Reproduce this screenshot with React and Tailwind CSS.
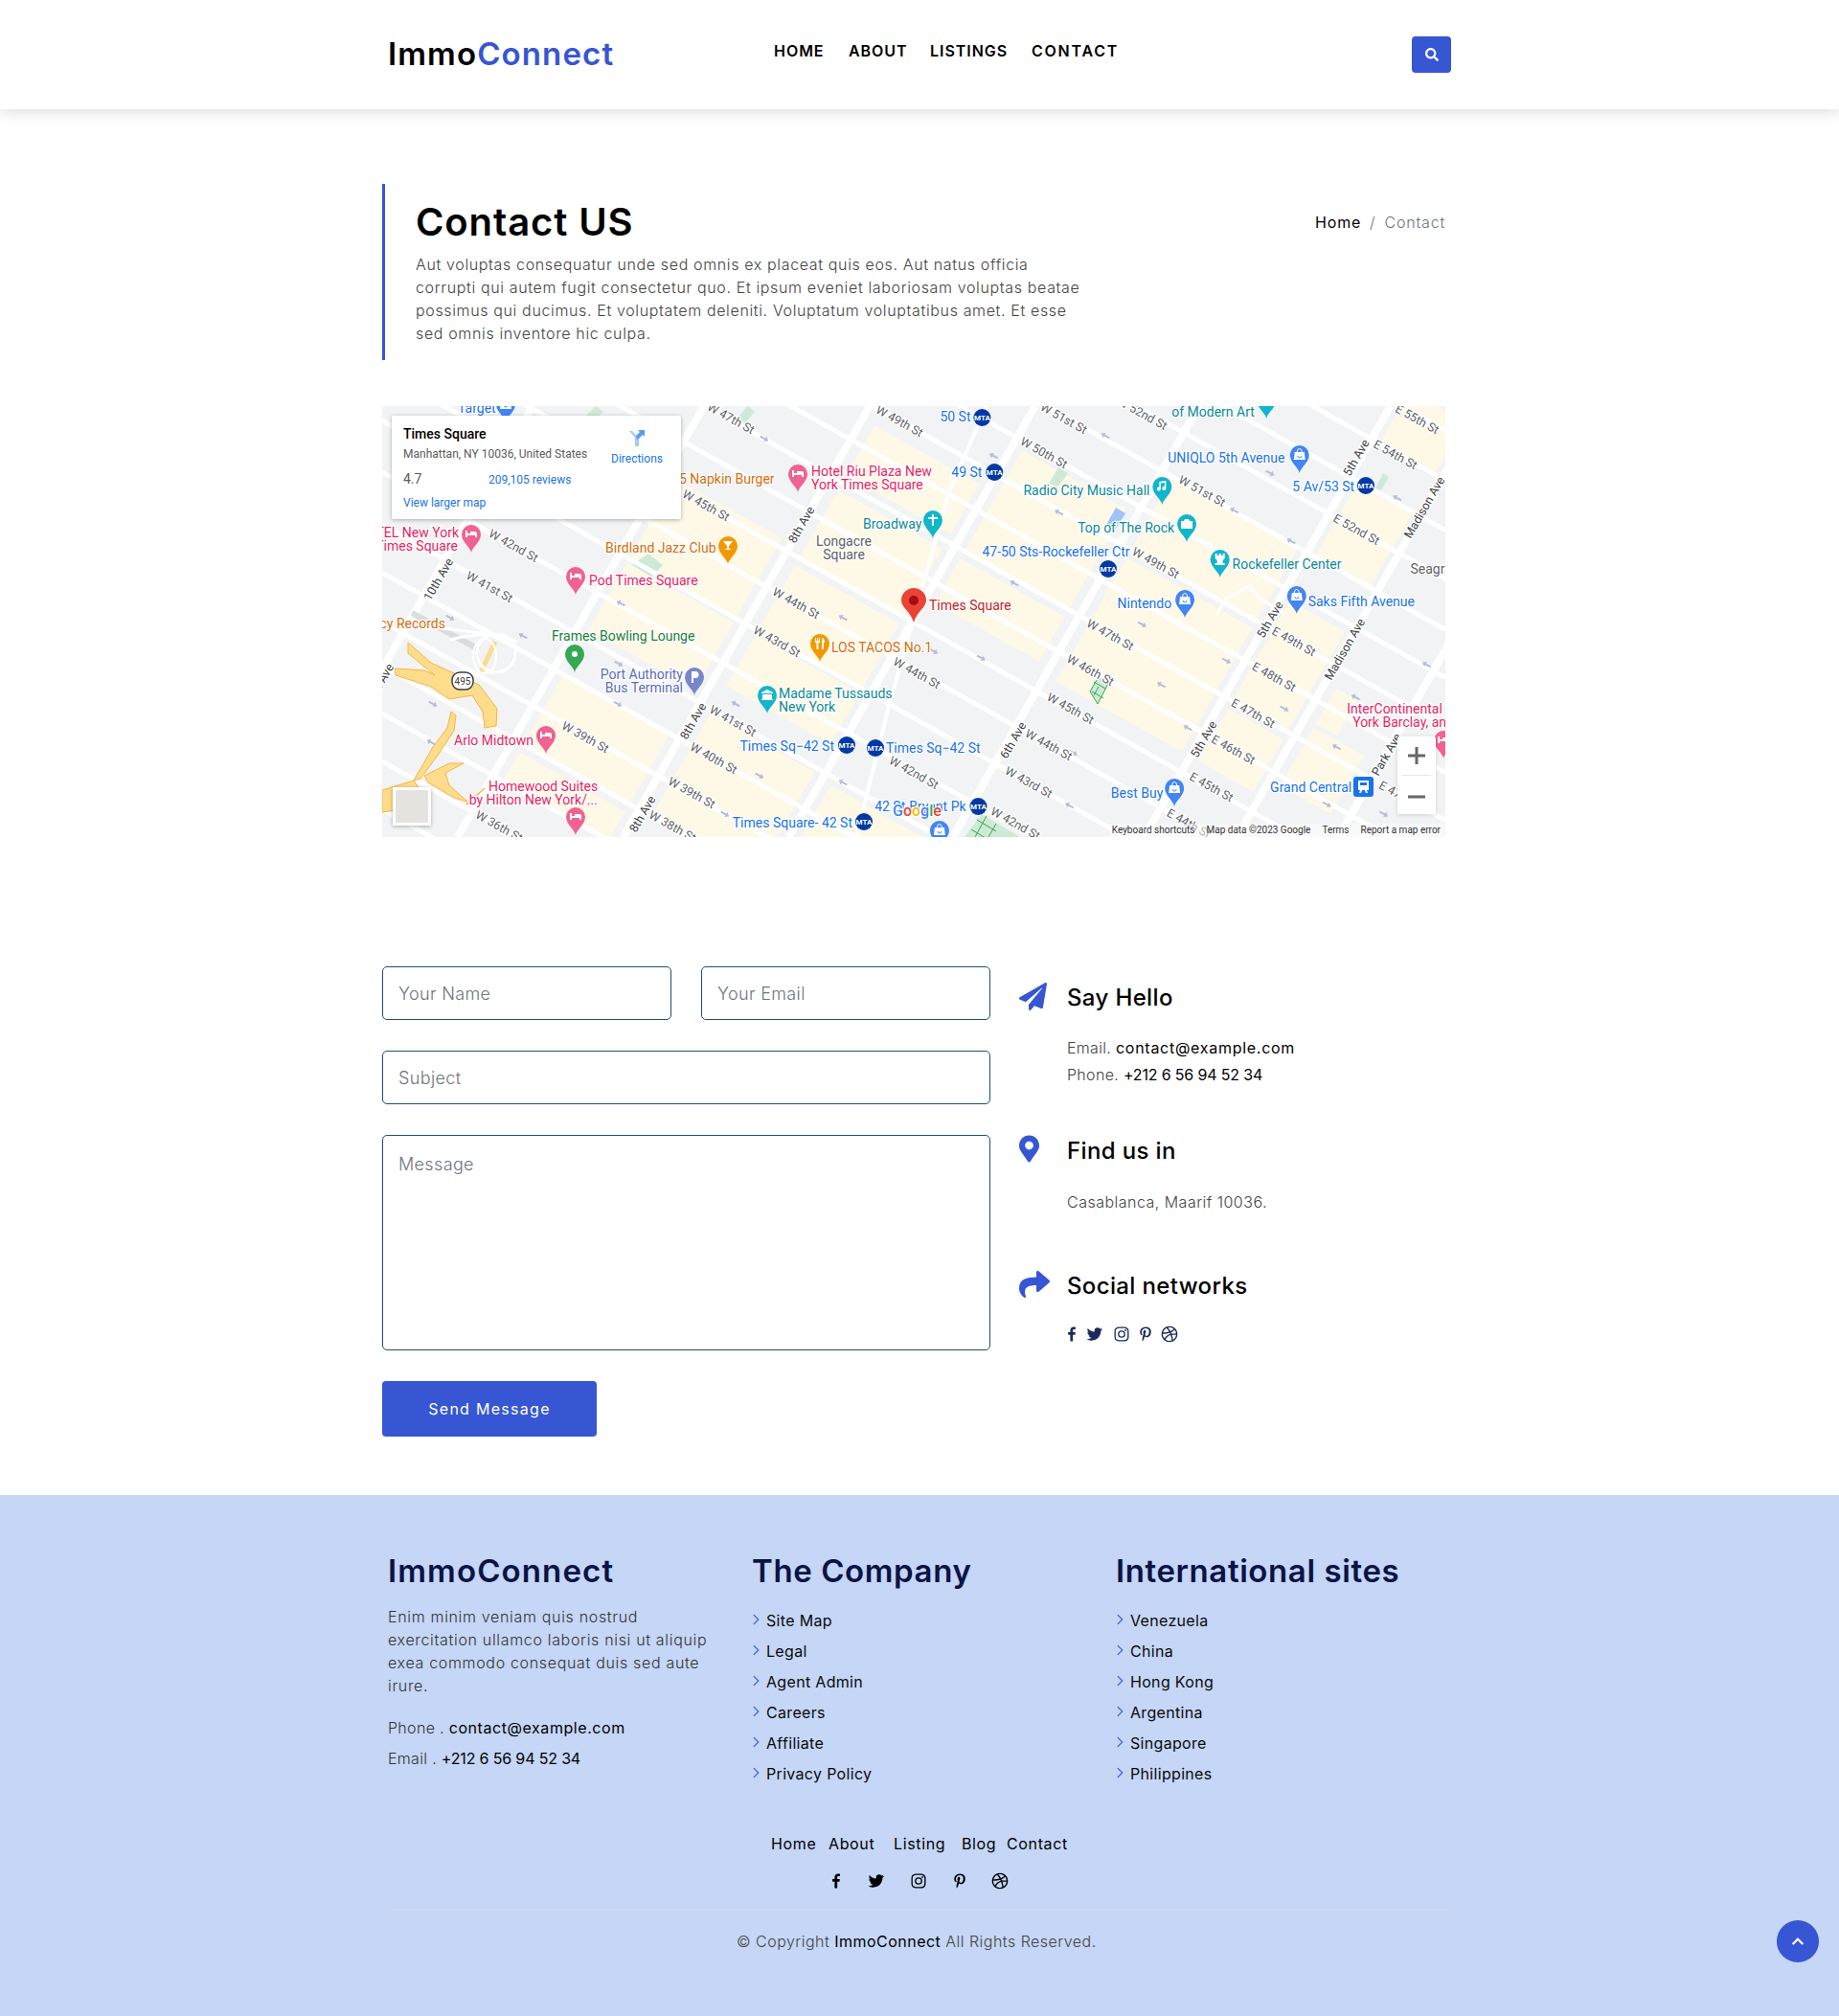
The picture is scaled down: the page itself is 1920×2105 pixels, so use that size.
import React from 'react'
import { BiLogoFacebook, BiLogoTwitter, BiLogoInstagram, BiLogoPinterestAlt, BiLogoDribbble } from 'react-icons/bi'
import { BsChevronRight } from 'react-icons/bs'
import { FaSearch, FaPaperPlane, FaMapMarkerAlt, FaShare, FaChevronUp } from 'react-icons/fa'

// eastern half of the map was read at a slightly different scale
const fx = (x) => (x > 970 ? 970 + (x - 970) * 0.9892 : x)

const AV = { tenth: 556, ninth: 735, eighth: 908, seventh: 1082, sixth: 1255, fifth: 1457, madison: 1555, park: 1662 }
const ST = { 56: -224, 55: -172, 54: -120, 53: -68, 52: -17, 51: 36, 50: 86, 49: 137, 48: 185, 47: 235, 46: 285, 45: 339, 44: 388, 43: 439, 42: 493, 41: 548, 40: 598, 39: 649, 38: 695, 37: 745, 36: 795, 35: 845 }

const streetY = (n) => {
  const lo = Math.floor(n)
  const hi = Math.ceil(n)
  return ST[lo] + (ST[hi] - ST[lo]) * (n - lo)
}

const corner = (x, n) => {
  const x0 = fx(x)
  const y = (streetY(n) + 0.56 * (x0 - 399) + 135.68) / 1.32
  return [x0 - (y - 424) / 1.75, y]
}

const block = (a, b, s1, s2) =>
  [corner(a, s1), corner(b, s1), corner(b, s2), corner(a, s2)].map((p) => p.join(',')).join(' ')

const yellowBlocks = [
  [748, 895, 45.2, 43],
  [748, 895, 42.9, 41.2],
  [748, 895, 40, 38],
  [748, 895, 37.8, 37],
  [925, 1070, 48.6, 47.2],
  [925, 1070, 46.8, 45],
  [925, 1070, 44.8, 43],
  [925, 1070, 42.9, 41.6],
  [925, 1070, 40.9, 38],
  [1095, 1240, 49.8, 47],
  [1095, 1240, 46.8, 45.6],
  [1095, 1240, 40.8, 39],
  [1270, 1445, 51, 49],
  [1270, 1445, 48.8, 45.4],
  [1468, 1545, 49.8, 47],
  [1468, 1545, 46.8, 45.4],
  [1468, 1545, 53, 51],
  [1468, 1545, 55.4, 54],
  [1570, 1600, 48.5, 47.5],
  [1570, 1640, 47.4, 45.8],
]

const greens = [
  '660,590 677,578 692,590 680,602',
  '610,436 622,424 630,430 618,442',
  '770,436 781,424 788,430 778,442',
  '1095,505 1105,488 1115,494 1105,508',
  '1436,510 1444,494 1450,498 1442,512',
  '1007,874 1025,850 1065,874',
]

const ramps = [
  '426,671 450,692 500,715 519,740 518,758 506,760 504,743 493,726 469,730 450,717 413,705 412,698 443,700 454,705 426,682',
  '471,743 476,747 474,763 456,790 439,813 432,815 452,780 467,760',
  '484,797 465,807 469,820 488,837 474,833 447,817 443,810 469,797',
  '399,825 432,815 445,835 420,845 399,848',
]

const streetLabels = [
  ['W 47th St', 763, 437], ['W 49th St', 939, 440], ['W 45th St', 737, 528], ['W 44th St', 831, 630],
  ['W 42nd St', 536, 570], ['W 41st St', 511, 613], ['W 43rd St', 811, 670], ['W 41st St', 765, 753],
  ['W 39th St', 611, 770], ['W 40th St', 745, 792], ['W 39th St', 722, 828], ['W 38th St', 702, 863],
  ['W 36th St', 521, 863], ['W 42nd St', 954, 807], ['W 44th St', 957, 703], ['W 51st St', 1112, 437],
  ['W 52nd St', 1195, 432], ['W 50th St', 1091, 473], ['W 51st St', 1258, 513], ['W 49th St', 1209, 588],
  ['E 55th St', 1485, 438], ['E 54th St', 1462, 475], ['E 52nd St', 1421, 553], ['W 47th St', 1161, 663],
  ['W 46th St', 1140, 700], ['W 45th St', 1119, 740], ['W 44th St', 1096, 778], ['W 43rd St', 1075, 817],
  ['W 42nd St', 1061, 860], ['E 49th St', 1355, 670], ['E 48th St', 1334, 707], ['E 47th St', 1312, 745],
  ['E 46th St', 1291, 783], ['E 45th St', 1268, 822], ['E 44th St', 1244, 860], ['E 47th St', 1468, 831],
]

const aveLabels = [
  ['10th Ave', 458, 605], ['10th Ave', 396, 715], ['8th Ave', 837, 548], ['8th Ave', 724, 753], ['8th Ave', 671, 850],
  ['5th Ave', 1421, 478], ['Madison Ave', 1493, 530], ['5th Ave', 1330, 647], ['6th Ave', 1059, 773],
  ['5th Ave', 1260, 772], ['Madison Ave', 1409, 678], ['Park Ave', 1453, 788],
]

const PINK = '#e91e63'
const ORANGE = '#d56e0c'
const TEAL = '#0b8a97'
const BLUE = '#1a73e8'
const GREEN = '#188038'
const INDIGO = '#5c6bc0'
const RED = '#c5221f'

const placeLabels = [
  ['Target', 478, 431, BLUE],
  ['TEL New York', 479, 561, PINK, 'end'],
  ['Times Square', 478, 575, PINK, 'end'],
  ['5 Napkin Burger', 709, 505, ORANGE],
  ['Hotel Riu Plaza New', 847, 497, PINK],
  ['York Times Square', 847, 511, PINK],
  ['Birdland Jazz Club', 632, 577, ORANGE],
  ['Pod Times Square', 615, 611, PINK],
  ['Broadway', 901, 552, TEAL],
  ['Longacre', 881, 570, '#5f6368', 'middle'],
  ['Square', 881, 584, '#5f6368', 'middle'],
  ['cy Records', 465, 656, ORANGE, 'end'],
  ['Times Square', 970, 637, RED],
  ['Frames Bowling Lounge', 576, 669, GREEN],
  ['Port Authority', 713, 709, INDIGO, 'end'],
  ['Bus Terminal', 713, 723, INDIGO, 'end'],
  ['LOS TACOS No.1', 868, 681, ORANGE],
  ['Madame Tussauds', 813, 729, TEAL],
  ['New York', 813, 743, TEAL],
  ['Times Sq−42 St', 871, 784, BLUE, 'end'],
  ['Times Sq−42 St', 925, 786, BLUE],
  ['Arlo Midtown', 557, 778, PINK, 'end'],
  ['Homewood Suites', 510, 826, PINK],
  ['by Hilton New York/...', 624, 840, PINK, 'end'],
  ['Times Square- 42 St', 890, 864, BLUE, 'end'],
  ['42 St-Bryant Pk', 1009, 847, BLUE, 'end'],
  ['50 St', 1014, 440, BLUE, 'end'],
  ['49 St', 1026, 498, BLUE, 'end'],
  ['of Modern Art', 1226, 435, TEAL],
  ['UNIQLO 5th Avenue', 1222, 483, BLUE],
  ['5 Av/53 St', 1419, 513, BLUE, 'end'],
  ['Radio City Music Hall', 1203, 517, TEAL, 'end'],
  ['Top of The Rock', 1229, 556, TEAL, 'end'],
  ['47-50 Sts-Rockefeller Ctr', 1026, 581, BLUE],
  ['Rockefeller Center', 1290, 594, TEAL],
  ['Nintendo', 1226, 635, BLUE, 'end'],
  ['Saks Fifth Avenue', 1370, 633, BLUE],
  ['Seagr', 1478, 599, '#5f6368'],
  ['InterContinental', 1411, 745, PINK],
  ['York Barclay, an', 1417, 759, PINK],
  ['Best Buy', 1217, 833, BLUE, 'end'],
  ['Grand Central', 1416, 827, BLUE, 'end'],
]

const pins = [
  [528, 422, '#4285f4', 'shop'], [492, 558, '#f06292', 'bed'], [833, 495, '#f06292', 'bed'], [760, 570, '#f29900', 'glass'],
  [601, 602, '#f06292', 'bed'], [974, 543, '#12b5cb', 'cross'], [600, 683, '#34a853', 'dot'], [725, 707, '#7986cb', 'p'],
  [856, 672, '#f29900', 'fork'], [801, 726, '#12b5cb', 'bank'], [570, 768, '#f06292', 'bed'], [601, 853, '#f06292', 'bed'],
  [1326, 418, '#12b5cb', 'dot'], [1361, 475, '#4285f4', 'shop'], [1216, 508, '#12b5cb', 'note'], [1242, 547, '#12b5cb', 'cam'],
  [1277, 584, '#12b5cb', 'rook'], [1240, 626, '#4285f4', 'shop'], [1358, 622, '#4285f4', 'shop'], [1229, 823, '#4285f4', 'shop'],
  [1513, 773, '#f06292', 'bed'], [981, 867, '#4285f4', 'shop'],
]

const mtas = [[884, 778], [914, 781], [902, 858], [1022, 842], [1026, 436], [1039, 493], [1431, 507], [1159, 594]]

// little one-way arrows on the cross streets
const arrows = [
  [642, 461, 1], [798, 458, 0], [733, 527, 0], [942, 548, 0], [648, 630, 1], [880, 645, 1], [975, 680, 0], [1038, 476, 1],
  [1156, 455, 1], [1270, 430, 1], [1330, 494, 0], [1107, 535, 1], [1292, 533, 1], [1352, 565, 1], [1464, 520, 1],
  [1060, 609, 1], [1195, 652, 0], [1215, 715, 1], [1284, 690, 0], [1243, 760, 1], [1025, 687, 0], [1122, 786, 0],
  [1118, 841, 1], [1345, 740, 0], [1420, 728, 1], [1495, 694, 1], [1400, 780, 1], [1447, 800, 0], [1390, 840, 0],
  [646, 693, 0], [546, 664, 1], [470, 645, 0], [645, 735, 0], [452, 735, 0], [450, 775, 1], [768, 735, 1], [793, 810, 0],
  [757, 850, 0], [880, 817, 1], [1450, 850, 0],
]

function Pin({ x, y, color, glyph }) {
  return (
    <g>
      <path
        d={`M${x} ${y + 19}C${x - 1} ${y + 13} ${x - 10} ${y + 8} ${x - 10} ${y}a10 10 0 1 1 20 0C${x + 10} ${y + 8} ${x + 1} ${y + 13} ${x} ${y + 19}Z`}
        fill={color}
      />
      {glyph === 'bed' && <path d={`M${x - 6} ${y - 4}h2v3h3v-2h5a2 2 0 0 1 2 2v4h-2v-2h-8v2h-2Z`} fill="#fff" />}
      {glyph === 'shop' && (
        <g>
          <path d={`M${x - 5} ${y - 3}h10l1 8h-12Z`} fill="#fff" />
          <path d={`M${x - 2} ${y + 1}a2 2 0 0 0 4 0`} fill="none" stroke={color} strokeWidth="1" />
          <path d={`M${x - 2.5} ${y - 3}a2.5 3.5 0 0 1 5 0`} fill="none" stroke="#fff" strokeWidth="1" />
        </g>
      )}
      {glyph === 'glass' && <path d={`M${x - 5} ${y - 5}h10l-4 5v3h2v1h-6v-1h2v-3Z`} fill="#fff" />}
      {glyph === 'cross' && <path d={`M${x - 1} ${y - 6}h2v3h4v2h-4v7h-2v-7h-4v-2h4Z`} fill="#fff" />}
      {glyph === 'dot' && <circle cx={x} cy={y} r="3" fill="#fff" />}
      {glyph === 'p' && <path d={`M${x - 3} ${y - 6}h4a3.5 3.5 0 0 1 0 7h-2v5h-2Z`} fill="#fff" />}
      {glyph === 'fork' && <path d={`M${x - 5} ${y - 6}h1v3h1v-3h1v3h1v-3h1v5h-1.500v7h-2v-7h-1.500ZM${x + 2} ${y - 6}c2 0 3 2 3 5h-1v7h-2Z`} fill="#fff" />}
      {glyph === 'bank' && <path d={`M${x} ${y - 6}l6 3v1h-12v-1ZM${x - 5} ${y - 1}h10v5h1v1h-12v-1h1Z`} fill="#fff" />}
      {glyph === 'note' && <path d={`M${x - 3} ${y - 5}l7-1v8a2 2 0 1 1-1.500-2v-4l-4 .6v6a2 2 0 1 1-1.500-2Z`} fill="#fff" />}
      {glyph === 'cam' && <path d={`M${x - 6} ${y - 3}h3l1-2h4l1 2h3v8h-12Z`} fill="#fff" />}
      {glyph === 'rook' && <path d={`M${x - 5} ${y - 6}h2v2h2v-2h2v2h2v-2h2v5l-2 2v3h2v2h-10v-2h2v-3l-2-2Z`} fill="#fff" />}
    </g>
  )
}

function MapDrawing() {
  const roads = Object.values(AV).map(fx)
  return (
    <svg viewBox="399 424 1110 450" className="block h-full w-full" style={{ fontFamily: 'Roboto, sans-serif' }}>
      <rect x="399" y="424" width="1110" height="450" fill="#f1f3f4" />
      {yellowBlocks.map((b, i) => (
        <polygon key={i} points={block(b[0], b[1], b[2], b[3])} fill="#fef8e6" />
      ))}
      {greens.map((g, i) => (
        <polygon key={i} points={g} fill="#ceead6" />
      ))}
      <polygon points="1155,548 1165,530 1175,536 1165,552" fill="#9ec3fb" />
      <polygon points="1138,722 1148,705 1158,712 1146,735" fill="#ceead6" stroke="#34a853" strokeWidth="1" />
      <path d="M1142 712l12 7M1140 722l12 7M1147 717l-5 9" stroke="#34a853" fill="none" />
      <path d="M1020 856l20 12M1014 866l20 12M1030 852l-12 22M1040 860l-8 14" stroke="#34a853" fill="none" />

      {Object.keys(ST).map((n) => (
        <line key={n} x1="399" y1={ST[n]} x2="1509" y2={ST[n] + 0.56 * 1110} stroke="#fff" strokeWidth="5" />
      ))}
      {roads.map((x0) => (
        <line key={x0} x1={x0} y1="424" x2={x0 - 450 / 1.75} y2="874" stroke="#fff" strokeWidth="8" />
      ))}
      <path d="M894 874L928 737L991 513L1030 424" fill="none" stroke="#fff" strokeWidth="4" />
      <path d="M1270 642L1280 625L1305 612L1315 625L1340 640" fill="none" stroke="#fff" strokeWidth="3" />

      {/* lincoln tunnel ramps */}
      <path d="M430 640L500 678" stroke="#dadce0" strokeWidth="6" fill="none" />
      {ramps.map((r, i) => (
        <polygon key={i} points={r} fill="#fddc8c" stroke="#f5b63f" strokeWidth="1" />
      ))}
      <path d="M517 670L502 702" stroke="#fddc8c" strokeWidth="5" fill="none" />
      <path d="M506 823L487 840" stroke="#f5b63f" strokeWidth="1.500" fill="none" />
      <ellipse cx="518" cy="682" rx="20" ry="20" fill="none" stroke="#fff" strokeWidth="3" />
      <ellipse cx="506" cy="685" rx="12" ry="18" fill="none" stroke="#fff" strokeWidth="2" />
      <path d="M455 655c30 5 60 5 85 15M470 668c15-4 35-6 50-4" stroke="#fff" strokeWidth="3" fill="none" />
      <rect x="472" y="702" width="22" height="18" rx="8" fill="#fff" stroke="#3c4043" strokeWidth="1.500" />
      <text x="483" y="715" textAnchor="middle" fontSize="10" fill="#3c4043">495</text>

      {arrows.map(([x, y, left], i) => (
        <path
          key={i}
          d={left ? 'M-5 0l4-3v2h6v2h-6v2Z' : 'M5 0l-4-3v2h-6v2h6v2Z'}
          transform={`translate(${fx(x)} ${y}) rotate(29)`}
          fill="#b8bcdb"
        />
      ))}

      <g fontSize="12.500" fill="#5f6368" stroke="#fff" strokeWidth="2.500" paintOrder="stroke" textAnchor="middle">
        {streetLabels.map(([t, x, y], i) => (
          <text key={i} x={fx(x)} y={y + 4} transform={`rotate(29 ${fx(x)} ${y})`}>{t}</text>
        ))}
        {aveLabels.map(([t, x, y], i) => (
          <text key={i} x={fx(x)} y={y + 4} fill="#3c4043" transform={`rotate(-60 ${fx(x)} ${y})`}>{t}</text>
        ))}
      </g>

      <g fontSize="14" stroke="#fff" strokeWidth="2.500" paintOrder="stroke">
        {placeLabels.map(([t, x, y, c, anchor], i) => (
          <text key={i} x={fx(x)} y={y} fill={c} textAnchor={anchor || 'start'}>{t}</text>
        ))}
      </g>

      {pins.map(([x, y, c, g], i) => (
        <Pin key={i} x={fx(x)} y={y} color={c} glyph={g} />
      ))}
      {mtas.map(([x, y], i) => (
        <g key={i}>
          <circle cx={fx(x)} cy={y} r="9" fill="#0039a6" />
          <text x={fx(x)} y={y + 3} textAnchor="middle" fontSize="8" fontWeight="700" fill="#fff">MTA</text>
        </g>
      ))}

      {/* grand central badge */}
      <rect x="1413" y="811" width="21" height="21" rx="3" fill="#1a73e8" />
      <path d="M1418 815h11v10h-2l1 3h-2l-1-3h-3l-1 3h-2l1-3h-2Z" fill="#fff" />
      <rect x="1420" y="817" width="7" height="3" fill="#1a73e8" />

      {/* red marker */}
      <path d="M954 650C951 639 941 634 941 627a13 13 0 1 1 26 0C967 634 957 639 954 650Z" fill="#ea4335" />
      <circle cx="954" cy="627" r="5" fill="#a50e0e" />

      <text x="932" y="852" fontSize="16" fontWeight="500" stroke="#fff" strokeWidth="2" paintOrder="stroke">
        <tspan fill="#4285f4">G</tspan><tspan fill="#ea4335">o</tspan><tspan fill="#fbbc05">o</tspan>
        <tspan fill="#4285f4">g</tspan><tspan fill="#34a853">l</tspan><tspan fill="#ea4335">e</tspan>
      </text>
    </svg>
  )
}

function MapBlock() {
  return (
    <div className="relative h-[450px] overflow-hidden font-['Roboto',sans-serif]">
      <MapDrawing />

      <div className="absolute left-[10px] top-[10px] h-[108px] w-[302px] rounded-[2px] bg-white shadow-[0_1px_4px_rgba(0,0,0,0.3)]">
        <div className="absolute left-[12px] top-[11px] text-[14px] font-medium leading-[16px] text-black">Times Square</div>
        <div className="absolute left-[12px] top-[32px] text-[12px] leading-[16px] text-[#5b5b5b]">Manhattan, NY 10036, United States</div>
        <div className="absolute left-[12px] top-[58px] text-[14px] leading-[16px] text-[#5b5b5b]">4.7</div>
        <div className="absolute left-[101px] top-[59px] text-[12px] leading-[16px] text-[#1a73e8]">209,105 reviews</div>
        <div className="absolute left-[12px] top-[83px] text-[12px] leading-[16px] text-[#1a73e8]">View larger map</div>
        <div className="absolute left-[229px] top-[14px] flex w-[54px] flex-col items-center">
          <svg width="20" height="20" viewBox="0 0 20 20">
            <path d="M2 2l6 7v9h4v-8L5 2Z" fill="#a9c9f5" />
            <path d="M12 10l4-4 2 2V1h-7l2 2-4 4 1 4Z" fill="#5b9cef" />
          </svg>
          <div className="mt-[4px] text-[12px] leading-[14px] text-[#1a73e8]">Directions</div>
        </div>
      </div>

      <div className="absolute left-[11px] top-[398px] h-[40px] w-[40px] border-[3px] border-white bg-[#e5e3df] shadow-[0_1px_4px_rgba(0,0,0,0.3)]" />

      <div className="absolute left-[1060px] top-[345px] flex h-[81px] w-[40px] flex-col items-center rounded-[2px] bg-white shadow-[0_1px_4px_rgba(0,0,0,0.15)]">
        <svg className="mt-[11px]" width="18" height="18" viewBox="0 0 18 18"><path d="M7.500 0h3v7.500H18v3h-7.500V18h-3v-7.500H0v-3h7.500Z" fill="#666" /></svg>
        <div className="mt-[11px] h-px w-[30px] bg-[#e6e6e6]" />
        <svg className="mt-[13px]" width="18" height="18" viewBox="0 0 18 18"><path d="M0 7.500h18v3H0Z" fill="#666" /></svg>
      </div>

      <div className="absolute bottom-0 right-0 flex h-[14px] items-center gap-[12px] bg-white/50 pr-[5px] pl-[2px] text-[10px] leading-[14px] text-[#333]">
        <span>Keyboard shortcuts</span>
        <span>Map data ©2023 Google</span>
        <span>Terms</span>
        <span>Report a map error</span>
      </div>
    </div>
  )
}

function Socials({ gaps, className, size }) {
  const icons = [BiLogoFacebook, BiLogoTwitter, BiLogoInstagram, BiLogoPinterestAlt, BiLogoDribbble]
  return (
    <div className={'flex items-center ' + className}>
      {icons.map((Icon, i) => (
        <Icon key={i} size={size} className={gaps[i]} />
      ))}
    </div>
  )
}

function FooterList({ title, items }) {
  return (
    <div className="w-[380px] shrink-0">
      <h3 className="text-[33px] font-semibold leading-[40px] tracking-[0.018em] text-[#0b1345]">{title}</h3>
      <ul className="mt-[16px]">
        {items.map((item) => (
          <li key={item} className="flex h-[32px] items-center text-[16px] tracking-[0.02em] text-[#0a0a0a]">
            <BsChevronRight size={12} className="mr-[3px] -mt-[2px] -ml-[3px] w-[15px] stroke-[0.6] text-[#2f4fd6]" />
            {item}
          </li>
        ))}
      </ul>
    </div>
  )
}

export default function App() {
  return (
    <div className="relative font-['Inter',sans-serif] text-black">
      <header className="h-[114px] bg-white shadow-[0_2px_15px_rgba(0,0,0,0.15)]">
        <div className="mx-auto flex h-full w-[1110px] items-center">
          <a className="w-[402px] text-[33px] font-semibold tracking-[0.034em]">
            Immo<span className="text-[#3656d3]">Connect</span>
          </a>
          <nav className="-mt-[8px] ml-px flex text-[16px] font-semibold tracking-[0.06em]">
            <a className="w-[78px]">HOME</a>
            <a className="w-[85px]">ABOUT</a>
            <a className="w-[106px]">LISTINGS</a>
            <a className="tracking-[0.11em]">CONTACT</a>
          </nav>
          <button className="ml-auto flex h-[38px] w-[41px] items-center justify-center rounded-[4px] bg-[#3656d3] text-white">
            <FaSearch size={14} />
          </button>
        </div>
      </header>

      <main className="ml-[399px] w-[1110px]">
        <section className="mt-[78px] flex h-[184px] items-start justify-between border-l-[3px] border-[#3656d3] pl-[32px]">
          <div>
            <h1 className="mt-[16px] text-[40px] font-semibold leading-[48px] tracking-[0.022em]">Contact US</h1>
            <p className="mt-[8px] w-[700px] text-[16px] font-light leading-[24px] tracking-[0.04em] text-[#444]">
              Aut voluptas consequatur unde sed omnis ex placeat quis eos. Aut natus officia corrupti qui autem fugit consectetur quo. Et ipsum eveniet laboriosam voluptas beatae possimus qui ducimus. Et voluptatem deleniti. Voluptatum voluptatibus amet. Et esse sed omnis inventore hic culpa.
            </p>
          </div>
          <div className="mt-[28px] flex items-center text-[16px] font-light tracking-[0.05em]">
            <span className="font-normal">Home</span>
            <span className="mx-[9px] text-[#6c757d]">/</span>
            <span className="text-[#6c757d]">Contact</span>
          </div>
        </section>

        <div className="mt-[48px]">
          <MapBlock />
        </div>

        <section className="mt-[135px] flex">
          <form className="w-[635px]">
            <div className="flex gap-[31px]">
              <input placeholder="Your Name" className="h-[56px] w-[302px] rounded-[5px] border border-[#1d4f73] px-[16px] text-[18px] font-light tracking-[0.02em] placeholder:text-[#6c757d]" />
              <input placeholder="Your Email" className="h-[56px] w-[302px] rounded-[5px] border border-[#1d4f73] px-[16px] text-[18px] font-light tracking-[0.02em] placeholder:text-[#6c757d]" />
            </div>
            <input placeholder="Subject" className="mt-[32px] block h-[56px] w-full rounded-[5px] border border-[#1d4f73] px-[16px] text-[18px] font-light tracking-[0.02em] placeholder:text-[#6c757d]" />
            <textarea placeholder="Message" className="mt-[32px] block h-[225px] w-full resize-none rounded-[5px] border border-[#1d4f73] px-[16px] py-[16px] text-[18px] font-light tracking-[0.02em] placeholder:text-[#6c757d]" />
            <button type="button" className="mt-[32px] block h-[58px] w-[224px] rounded-[4px] bg-[#3656d3] text-[16px] font-normal tracking-[0.08em] text-white">
              Send Message
            </button>
          </form>

          <div className="ml-[30px] w-[444px]">
            <div className="flex">
              <FaPaperPlane size={29} className="mt-[17px] w-[29px] text-[#3656d3]" />
              <div className="ml-[21px]">
                <h4 className="mt-[15px] text-[24px] font-medium leading-[36px] tracking-[0.015em]">Say Hello</h4>
                <p className="mt-[20px] text-[16px] font-light leading-[28px] tracking-[0.02em] text-[#444]">
                  Email. <span className="font-normal tracking-[0.045em] text-black">contact@example.com</span>
                  <br />
                  Phone. <span className="font-normal tracking-[-0.01em] text-black">+212 6 56 94 52 34</span>
                </p>
              </div>
            </div>
            <div className="mt-[48px] flex">
              <FaMapMarkerAlt size={29} className="mt-[1px] w-[21px] text-[#3656d3]" />
              <div className="ml-[29px]">
                <h4 className="text-[24px] font-medium leading-[36px] tracking-[0.015em]">Find us in</h4>
                <p className="mt-[21px] text-[16px] font-light leading-[28px] tracking-[0.03em] text-[#444]">Casablanca, Maarif 10036.</p>
              </div>
            </div>
            <div className="mt-[56px] flex">
              <FaShare size={32} className="w-[32px] text-[#3656d3]" />
              <div className="ml-[18px]">
                <h4 className="text-[24px] font-medium leading-[36px] tracking-[0.015em]">Social networks</h4>
                <Socials
                  size={20}
                  className="mt-[22px] -ml-[5px] text-[#1b2a5c]"
                  gaps={['mr-[4px]', 'mr-[8px]', 'mr-[5px]', 'mr-[5px]', '']}
                />
              </div>
            </div>
          </div>
        </section>
      </main>

      <footer className="relative mt-[61px] h-[544px] bg-[#c5d6f6] pt-[59px]">
        <div className="mx-auto flex w-[1110px]">
          <div className="w-[380px] shrink-0">
            <h3 className="text-[33px] font-semibold leading-[40px] tracking-[0.034em] text-[#0b1345]">ImmoConnect</h3>
            <p className="mt-[16px] w-[345px] text-[16px] font-light leading-[24px] tracking-[0.042em] text-[#333]">
              Enim minim veniam quis nostrud exercitation ullamco laboris nisi ut aliquip exea commodo consequat duis sed aute irure.
            </p>
            <div className="mt-[16px] text-[16px] font-light leading-[32px] tracking-[0.02em] text-[#333]">
              Phone . <span className="font-normal tracking-[0.035em] text-black">contact@example.com</span>
              <br />
              Email . <span className="font-normal tracking-[-0.01em] text-black">+212 6 56 94 52 34</span>
            </div>
          </div>
          <FooterList title="The Company" items={['Site Map', 'Legal', 'Agent Admin', 'Careers', 'Affiliate', 'Privacy Policy']} />
          <FooterList title="International sites" items={['Venezuela', 'China', 'Hong Kong', 'Argentina', 'Singapore', 'Philippines']} />
        </div>

        <div className="mt-[45px] flex justify-start pl-[805px] text-[16px] font-normal leading-[24px] tracking-[0.04em]">
          <a className="w-[60px]">Home</a>
          <a className="w-[68px]">About</a>
          <a className="w-[71px]">Listing</a>
          <a className="w-[47px]">Blog</a>
          <a>Contact</a>
        </div>
        <Socials
          size={20}
          className="mt-[17px] pl-[863px] text-black"
          gaps={['mr-[22px]', 'mr-[24px]', 'mr-[23px]', 'mr-[22px]', '']}
        />
        <div className="mx-auto mt-[20px] h-px w-[1110px] bg-[#d3d9ee]" />
        <div className="mt-[20px] pl-[769px] text-[16px] font-light leading-[24px] tracking-[0.03em] text-[#444]">
          © Copyright <span className="font-normal text-black">ImmoConnect</span> All Rights Reserved.
        </div>

        <a className="absolute left-[1855px] top-[444px] flex h-[44px] w-[44px] items-center justify-center rounded-full bg-[#3656d3] text-white">
          <FaChevronUp size={14} />
        </a>
      </footer>
    </div>
  )
}
